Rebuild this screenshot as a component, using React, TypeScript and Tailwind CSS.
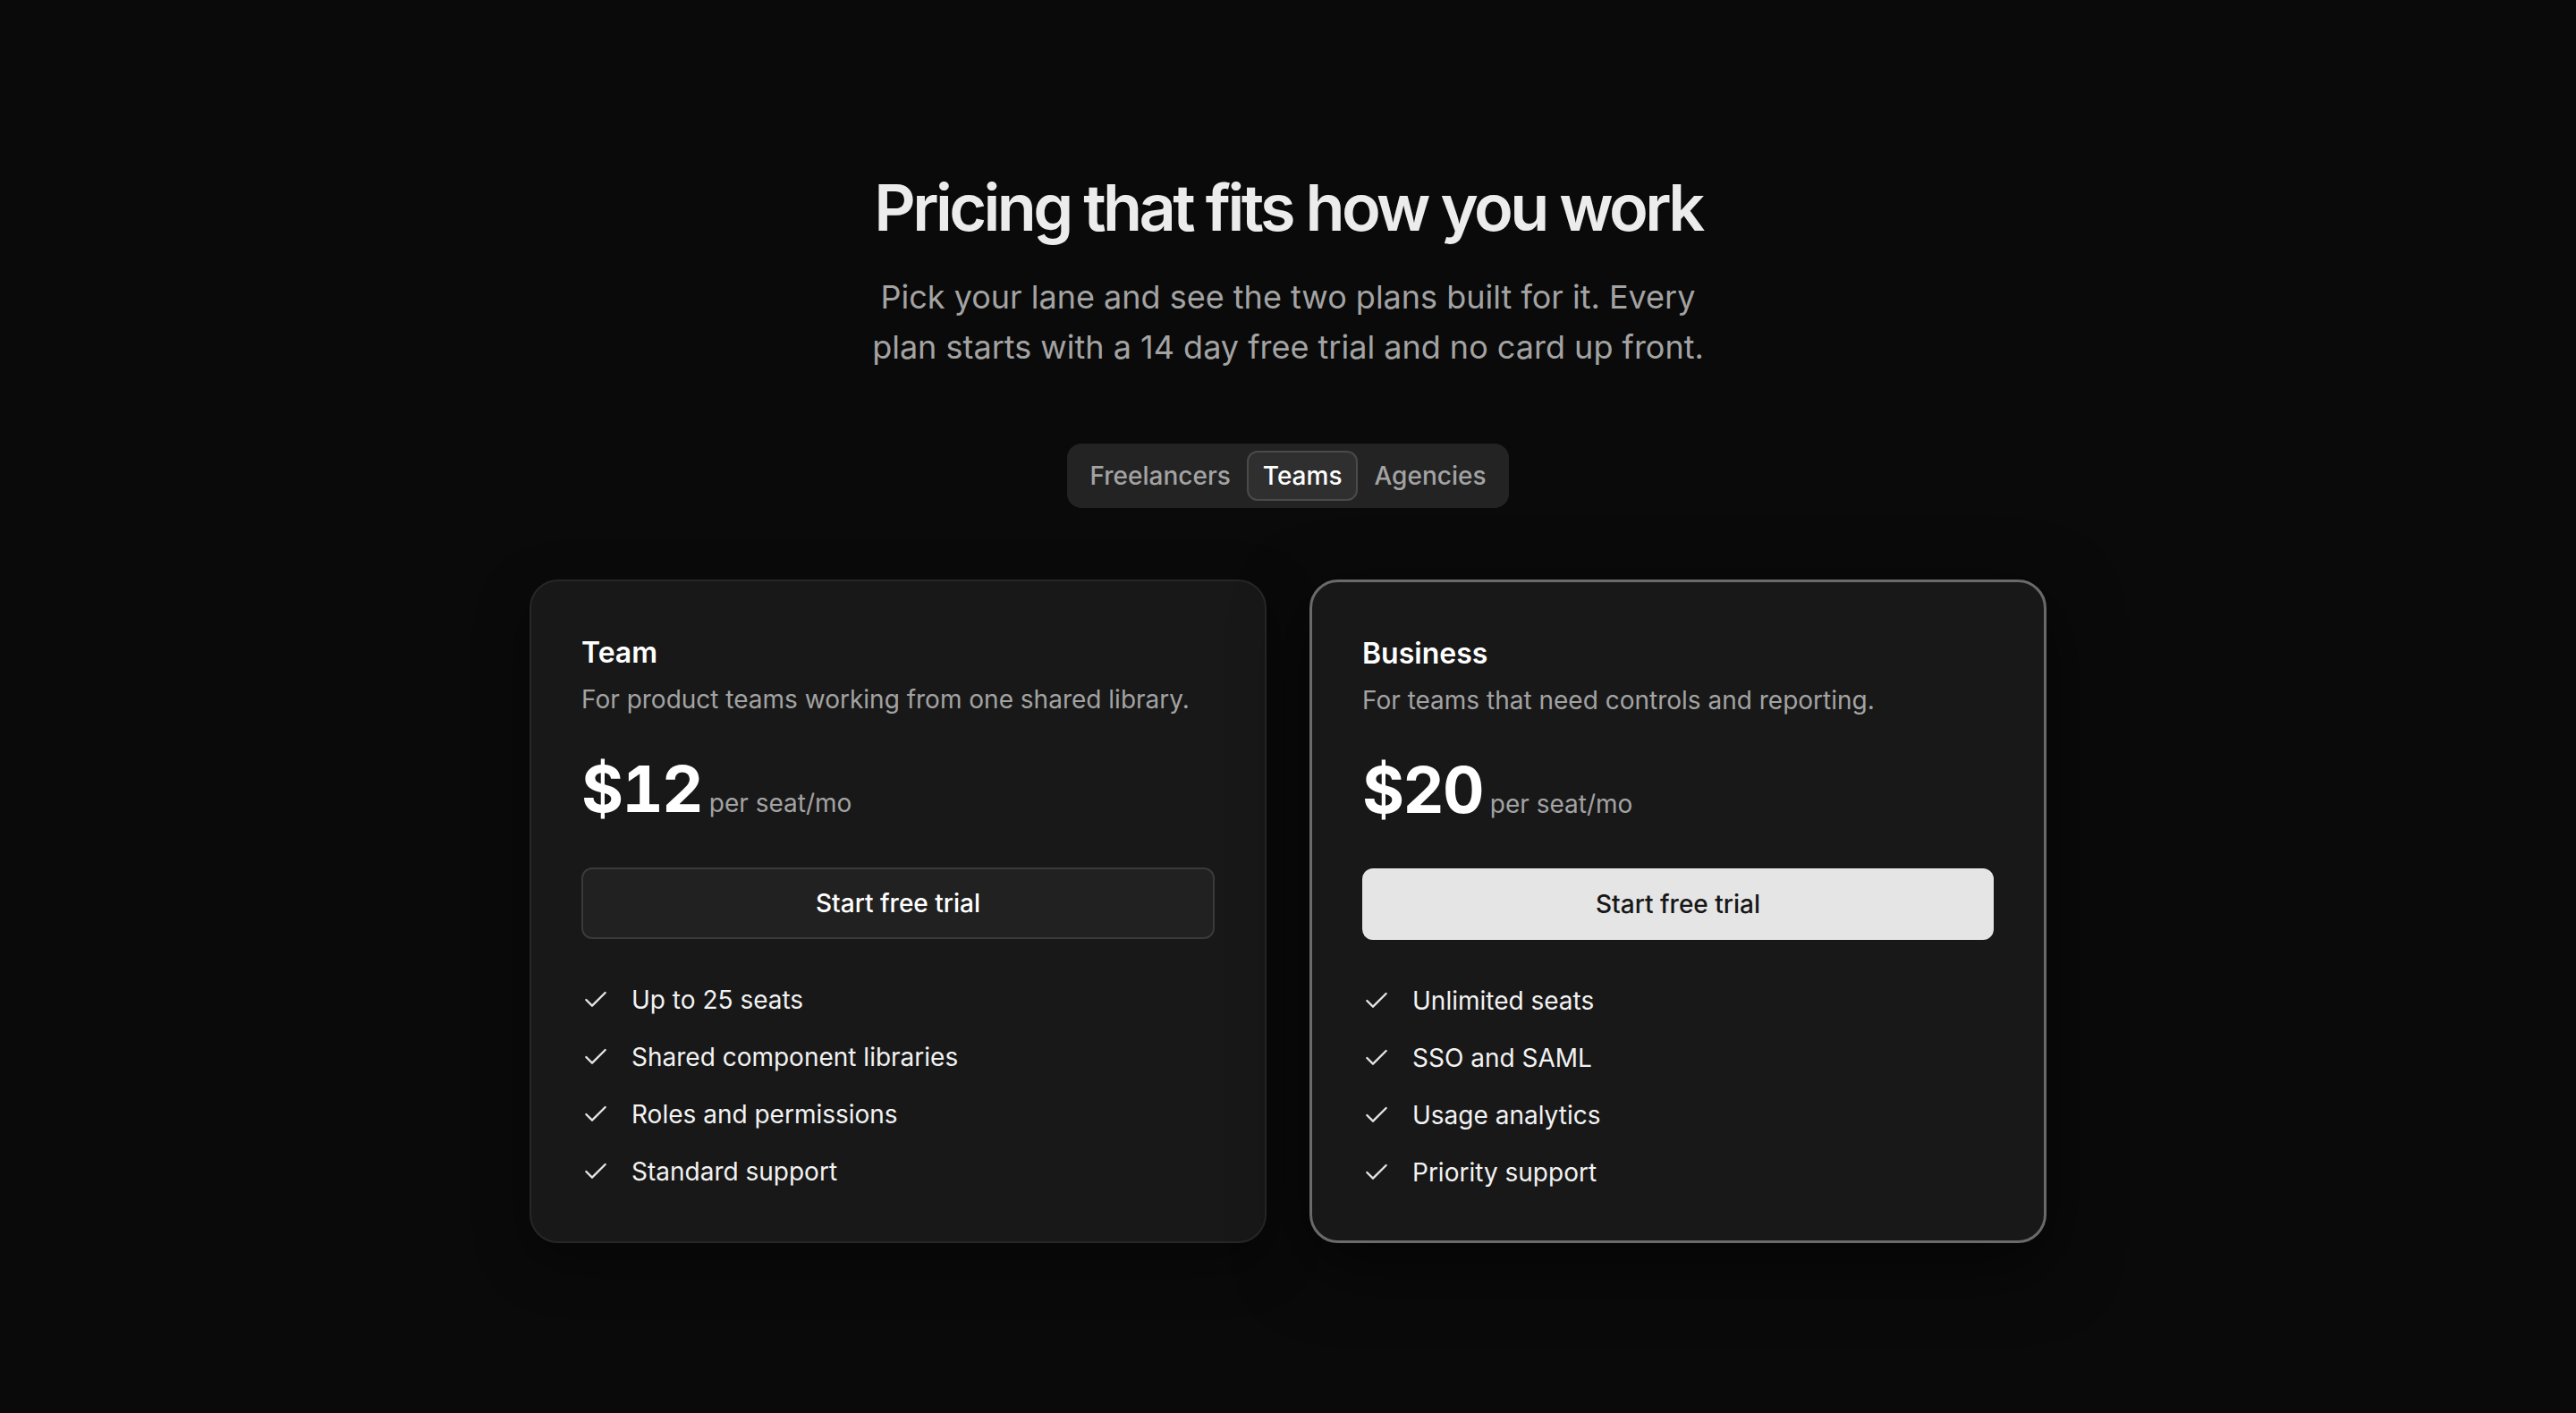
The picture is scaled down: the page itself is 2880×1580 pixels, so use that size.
import { useState } from "react";
import { Check } from "lucide-react";

const LANES = ["Freelancers", "Teams", "Agencies"] as const;
type Lane = (typeof LANES)[number];

interface Plan {
  name: string;
  blurb: string;
  price: string;
  unit: string;
  features: string[];
  featured?: boolean;
}

const PLANS: Record<Lane, Plan[]> = {
  Freelancers: [
    {
      name: "Solo",
      blurb: "For one person shipping client work.",
      price: "$8",
      unit: "per month",
      features: ["1 seat", "Unlimited projects", "Client share links", "Email support"],
    },
    {
      name: "Solo Pro",
      blurb: "For freelancers who need more room.",
      price: "$15",
      unit: "per month",
      features: ["1 seat", "Custom domains", "Version history", "Priority support"],
      featured: true,
    },
  ],
  Teams: [
    {
      name: "Team",
      blurb: "For product teams working from one shared library.",
      price: "$12",
      unit: "per seat/mo",
      features: ["Up to 25 seats", "Shared component libraries", "Roles and permissions", "Standard support"],
    },
    {
      name: "Business",
      blurb: "For teams that need controls and reporting.",
      price: "$20",
      unit: "per seat/mo",
      features: ["Unlimited seats", "SSO and SAML", "Usage analytics", "Priority support"],
      featured: true,
    },
  ],
  Agencies: [
    {
      name: "Studio",
      blurb: "For agencies juggling several clients.",
      price: "$18",
      unit: "per seat/mo",
      features: ["Client workspaces", "White-label sharing", "Guest access", "Standard support"],
    },
    {
      name: "Agency",
      blurb: "For larger shops with many accounts.",
      price: "$30",
      unit: "per seat/mo",
      features: ["Unlimited workspaces", "SSO and SAML", "Billing per client", "Priority support"],
      featured: true,
    },
  ],
};

function PlanCard({ plan }: { plan: Plan }) {
  return (
    <div
      className={[
        "flex flex-col rounded-[32px] bg-[#181818] p-14",
        plan.featured
          ? "border-[3px] border-[#6a6a6a] shadow-[0_24px_80px_rgba(0,0,0,0.6)]"
          : "border-2 border-[#272727] shadow-[0_20px_60px_rgba(0,0,0,0.4)]",
      ].join(" ")}
    >
      <h3 className="text-[32px] leading-[48px] font-semibold text-white">{plan.name}</h3>
      <p className="mt-2 text-[28px] leading-[40px] text-[#a3a3a3]">{plan.blurb}</p>

      <div className="mt-10 flex items-baseline gap-2">
        <span className="text-[72px] leading-[80px] font-bold tracking-tight tabular-nums text-white">
          {plan.price}
        </span>
        <span className="text-[28px] leading-[40px] text-[#a3a3a3]">{plan.unit}</span>
      </div>

      <button
        type="button"
        className={[
          "mt-12 h-20 w-full rounded-xl border-2 text-[28px] font-medium",
          plan.featured
            ? "border-[#e5e5e5] bg-[#e5e5e5] text-[#171717]"
            : "border-[#3a3a3a] bg-[#212121] text-white",
        ].join(" ")}
      >
        Start free trial
      </button>

      <ul className="mt-12 space-y-6">
        {plan.features.map((f) => (
          <li key={f} className="flex items-center gap-6 text-[28px] leading-[40px] text-[#f2f2f2]">
            <Check size={32} strokeWidth={1.75} className="shrink-0 text-[#e5e5e5]" />
            {f}
          </li>
        ))}
      </ul>
    </div>
  );
}

export default function App() {
  const [lane, setLane] = useState<Lane>("Teams");

  return (
    <div
      className="min-h-screen bg-[#0a0a0a] px-12 pt-[192px] pb-48"
      style={{ fontFamily: "Inter, 'Noto Sans', sans-serif" }}
    >
      <div className="mx-auto flex max-w-[1696px] flex-col items-center">
        <h1 className="text-[72px] leading-[80px] font-semibold tracking-tighter text-[#ececec]">
          Pricing that fits how you work
        </h1>
        <p className="mt-8 max-w-[960px] text-center text-[36px] leading-[56px] text-[#a3a3a3]">
          Pick your lane and see the two plans built for it. Every plan starts with a 14 day free
          trial and no card up front.
        </p>

        {/* lane switcher */}
        <div className="mt-20 flex rounded-2xl bg-[#232323] p-2">
          {LANES.map((l) => (
            <button
              key={l}
              type="button"
              onClick={() => setLane(l)}
              className={[
                "h-14 rounded-xl border-2 px-4 text-[28px] font-medium",
                lane === l
                  ? "border-[#4a4a4a] bg-[#2f2f2f] text-white"
                  : "border-transparent text-[#a3a3a3]",
              ].join(" ")}
            >
              {l}
            </button>
          ))}
        </div>

        <div className="mt-20 grid w-full grid-cols-2 gap-12">
          {PLANS[lane].map((p) => (
            <PlanCard key={p.name} plan={p} />
          ))}
        </div>
      </div>
    </div>
  );
}
